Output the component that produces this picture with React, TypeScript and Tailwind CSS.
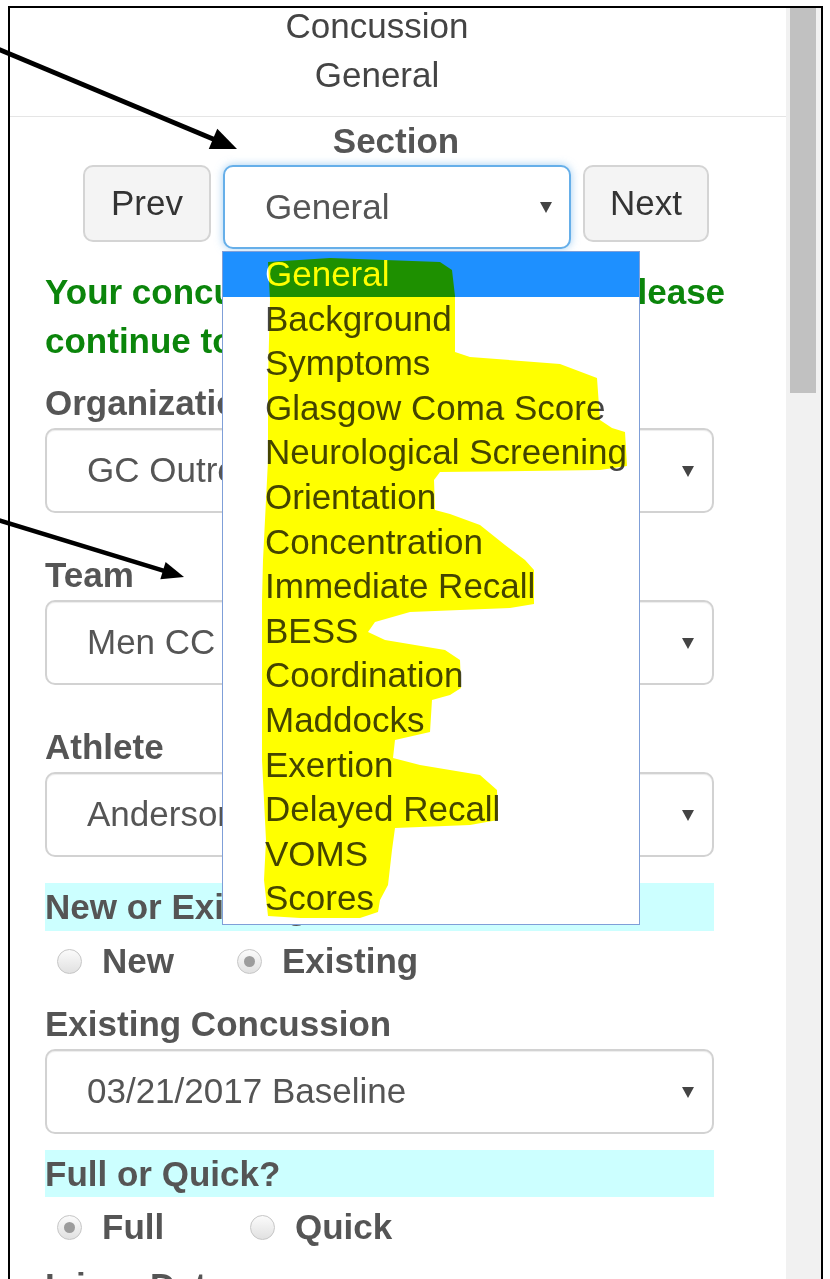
import React from "react";

const sections = [
  "General",
  "Background",
  "Symptoms",
  "Glasgow Coma Score",
  "Neurological Screening",
  "Orientation",
  "Concentration",
  "Immediate Recall",
  "BESS",
  "Coordination",
  "Maddocks",
  "Exertion",
  "Delayed Recall",
  "VOMS",
  "Scores",
];

// marker stroke over the open section list
const highlight =
  "M268 262 L330 258 L440 262 L452 270 L455 296 L455 352 L470 357 L560 364 L597 378 L600 420 L612 428 L625 432 L627 466 L600 470 L440 472 L434 480 L435 510 L450 514 L480 525 L505 545 L525 560 L534 570 L534 604 L510 608 L410 612 L375 622 L368 632 L385 640 L445 650 L460 660 L461 688 L450 695 L432 700 L430 732 L395 740 L393 758 L420 765 L480 775 L497 790 L498 820 L470 825 L395 828 L392 850 L388 885 L380 900 L378 912 L360 918 L300 918 L268 916 L264 880 L266 840 L262 760 L262 600 L263 560 L266 500 L268 460 L268 380 L270 300 Z";

function Caret() {
  return (
    <svg width="12" height="12" viewBox="0 0 12 12" className="shrink-0">
      <polygon points="0,1 12,1 6,12" fill="#444" />
    </svg>
  );
}

function SelectBox({ value }: { value: string }) {
  return (
    <div className="flex h-[85px] items-center justify-between rounded-[10px] border-2 border-[#d2d2d2] bg-white pl-[40px] pr-[18px] text-[#555] shadow-[inset_0_1px_1px_rgba(0,0,0,0.075)]">
      <span>{value}</span>
      <Caret />
    </div>
  );
}

function Radio({ checked }: { checked?: boolean }) {
  return (
    <span className="flex h-[25px] w-[25px] shrink-0 items-center justify-center rounded-full border border-[#c6c6c6] bg-linear-to-b from-[#fbfbfb] to-[#e1e1e1]">
      {checked && <span className="h-[11px] w-[11px] rounded-full bg-[#9c9c9c]" />}
    </span>
  );
}

function Arrow({ x1, y1, x2, y2, w, head, half }: { x1: number; y1: number; x2: number; y2: number; w: number; head: number; half: number }) {
  const len = Math.hypot(x2 - x1, y2 - y1);
  const ux = (x2 - x1) / len;
  const uy = (y2 - y1) / len;
  const bx = x2 - ux * head;
  const by = y2 - uy * head;
  const pts = `${x2},${y2} ${bx - uy * half},${by + ux * half} ${bx + uy * half},${by - ux * half}`;
  return (
    <g>
      <line x1={x1} y1={y1} x2={bx + ux * 2} y2={by + uy * 2} stroke="#000" strokeWidth={w} />
      <polygon points={pts} fill="#000" />
    </g>
  );
}

export default function App() {
  return (
    <div className="relative h-[1279px] w-[830px] overflow-hidden bg-white font-['Liberation_Sans',Arial,sans-serif] text-[35px]">
      <div className="ml-[8px] mt-[6px] flex h-[1300px] w-[815px] border-x-2 border-t-2 border-black">
        <div className="flex-1">
          {/* page title */}
          <div className="border-b border-[#e5e5e5] pb-[23px] pr-[42px] text-center leading-[36px] text-[#444]">
            <div>Concussion</div>
            <div className="mt-[13px]">General</div>
          </div>

          <div className="pr-[4px]">
            <div className="mt-[6px] text-center font-bold leading-[36px] text-[#555]">Section</div>
            <div className="mt-[6px] flex items-start justify-center gap-[12px]">
              <button className="flex h-[77px] w-[128px] items-center justify-center rounded-[10px] border-2 border-[#d4d4d4] bg-[#f4f4f4] text-[#333]">
                Prev
              </button>
              <div className="flex h-[84px] w-[348px] items-center justify-between rounded-[10px] border-2 border-[#66afe9] bg-white pl-[40px] pr-[17px] text-[#555] shadow-[0_0_8px_rgba(102,175,233,0.6)]">
                <span>General</span>
                <Caret />
              </div>
              <button className="flex h-[77px] w-[126px] items-center justify-center rounded-[10px] border-2 border-[#d4d4d4] bg-[#f4f4f4] text-[#333]">
                Next
              </button>
            </div>
          </div>

          <div className="mt-[18px] whitespace-nowrap pl-[35px] font-bold leading-[49px] text-[#0b850b]">
            <div>Your concussion has been found. Please</div>
            <div>continue to the next section.</div>
          </div>

          <div className="ml-[35px] w-[669px] font-bold text-[#555]">
            <div className="mt-[20px] leading-[36px]">Organization</div>
            <div className="mt-[7px] font-normal">
              <SelectBox value="GC Outreach" />
            </div>

            <div className="mt-[44px] leading-[36px]">Team</div>
            <div className="mt-[7px] font-normal">
              <SelectBox value="Men CC" />
            </div>

            <div className="mt-[44px] leading-[36px]">Athlete</div>
            <div className="mt-[7px] font-normal">
              <SelectBox value="Anderson, Mark" />
            </div>

            <div className="mt-[26px] h-[48px] bg-[#ccffff] leading-[48px]">New or Existing?</div>
            <div className="flex h-[60px] items-center pl-[12px]">
              <div className="flex w-[180px] items-center gap-[20px]">
                <Radio />
                <span>New</span>
              </div>
              <div className="flex items-center gap-[20px]">
                <Radio checked />
                <span>Existing</span>
              </div>
            </div>

            <div className="mt-[15px] leading-[36px]">Existing Concussion</div>
            <div className="mt-[7px] font-normal">
              <SelectBox value="03/21/2017 Baseline" />
            </div>

            <div className="mt-[16px] h-[47px] bg-[#ccffff] leading-[47px]">Full or Quick?</div>
            <div className="flex h-[60px] items-center pl-[12px]">
              <div className="flex w-[193px] items-center gap-[20px]">
                <Radio checked />
                <span>Full</span>
              </div>
              <div className="flex items-center gap-[20px]">
                <Radio />
                <span>Quick</span>
              </div>
            </div>

            <div className="mt-[11px] leading-[36px]">Injury Date</div>
          </div>
        </div>

        {/* scrollbar */}
        <div className="w-[35px] bg-[#f1f1f1] pl-[4px]">
          <div className="h-[385px] w-[26px] bg-[#c1c1c1]" />
        </div>
      </div>

      {/* open section list */}
      <div className="absolute left-[222px] top-[251px] w-[418px] border border-[#7f9fd8] bg-white pb-[3px] text-[#444]">
        {sections.map((s, i) => (
          <div
            key={s}
            className={i === 0 ? "h-[44.6px] bg-[#1e90ff] pl-[42px] leading-[44.6px] text-white" : "h-[44.6px] pl-[42px] leading-[44.6px]"}
          >
            {s}
          </div>
        ))}
      </div>

      <svg className="pointer-events-none absolute left-0 top-0 mix-blend-multiply" width="830" height="1279" viewBox="0 0 830 1279">
        <path d={highlight} fill="#ffff00" />
      </svg>

      <svg className="pointer-events-none absolute left-0 top-0" width="830" height="1279" viewBox="0 0 830 1279">
        <Arrow x1={-2} y1={49} x2={237} y2={149} w={5} head={26} half={11} />
        <Arrow x1={-2} y1={520} x2={184} y2={577} w={4.5} head={22} half={9} />
      </svg>
    </div>
  );
}
